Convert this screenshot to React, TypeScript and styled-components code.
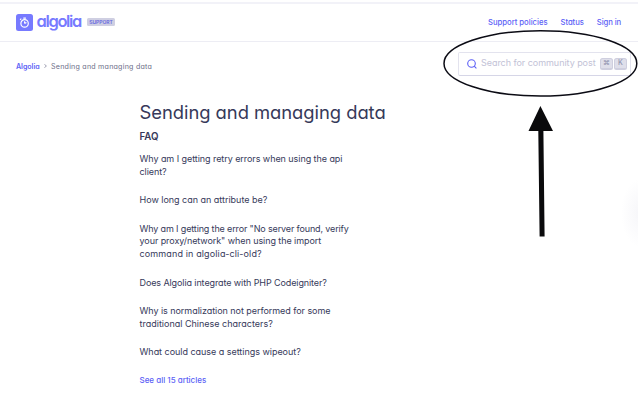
import React from "react";
import styled, { createGlobalStyle } from "styled-components";

const Global = createGlobalStyle`
  * { box-sizing: border-box; }
  body {
    margin: 0;
    background: #fff;
    color: #36395a;
    font-family: Inter, "Open Sans", sans-serif;
    font-feature-settings: "cv11" 1;
    overflow: hidden;
  }
`;

const Page = styled.div`
  position: relative;
  height: 400px;
  padding-top: 2px;
  overflow: hidden;
  background: radial-gradient(ellipse 19px 34px at 640px 213px, #f6f6f9, #fff);
`;

const Header = styled.header`
  height: 40px;
  padding: 0 17px 0 16px;
  display: flex;
  align-items: flex-start;
  justify-content: space-between;
  border-top: 2px solid #f2f2f8;
  border-bottom: 1px solid #ededf4;
`;

const Brand = styled.div`
  display: flex;
  align-items: center;
  height: 17px;
  margin-top: 10px;
`;

const LogoMark = styled.svg`
  width: 17px;
  height: 17px;
`;

const Wordmark = styled.span`
  margin: -2px 0 0 3.5px;
  width: 50.5px;
  font-size: 16.5px;
  line-height: 17px;
  font-weight: 600;
  letter-spacing: -1.35px;
  color: #777aff;
`;

const Badge = styled.span`
  width: 28px;
  height: 8.5px;
  margin-top: -1px;
  border-radius: 1.5px;
  background: #cfcfe2;
  color: #6668e0;
  font-size: 5px;
  line-height: 9px;
  font-weight: 600;
  text-align: center;
  letter-spacing: -0.05px;
`;

const Nav = styled.nav`
  display: flex;
  gap: 13px;
  margin-top: 13px;
`;

const NavLink = styled.a<{ $track: number }>`
  font-size: 7.7px;
  line-height: 11px;
  font-weight: 500;
  letter-spacing: ${(p) => p.$track}px;
  color: #5c5ff6;
  white-space: nowrap;
`;

const SubHeader = styled.div`
  display: flex;
  justify-content: space-between;
  padding: 10px 7px 0 16px;
`;

const Crumbs = styled.div`
  display: flex;
  align-items: center;
  height: 10px;
  margin-top: 9px;
  font-size: 7.1px;
  white-space: nowrap;
`;

const CrumbLink = styled.a`
  width: 24px;
  font-weight: 600;
  letter-spacing: -0.04px;
  color: #5c5ff6;
`;

const Chevron = styled.svg`
  width: 3px;
  height: 4px;
  margin: 0 4px;
`;

const CrumbCurrent = styled.span`
  letter-spacing: 0.23px;
  color: #6c6e88;
`;

const Search = styled.div`
  width: 173px;
  height: 24px;
  padding: 0 4px 1px 8px;
  display: flex;
  align-items: center;
  border: 1px solid #e3e3ee;
  border-bottom-color: #d6d6e7;
  border-radius: 2px;
`;

const SearchIcon = styled.svg`
  width: 10px;
  height: 10px;
  margin-right: 4px;
  flex: none;
`;

const Placeholder = styled.span`
  width: 119px;
  flex: none;
  font-size: 9px;
  line-height: 12px;
  margin-top: -1px;
  letter-spacing: -0.04px;
  color: #c2c2d6;
  white-space: nowrap;
`;

const Key = styled.kbd`
  flex: none;
  width: 13px;
  height: 12px;
  margin-right: 1px;
  display: grid;
  place-items: center;
  border: 1px solid #cfcfdf;
  border-bottom-width: 2px;
  border-radius: 2.5px;
  background: #dfdfea;
  color: #9294b0;
  font: 500 7px/8px Inter, "DejaVu Sans", sans-serif;
`;

const Main = styled.main`
  padding: 22px 0 0 139.5px;
`;

const Title = styled.h1`
  margin: 0;
  font-size: 18.4px;
  line-height: 28px;
  font-weight: 400;
  letter-spacing: -0.04px;
  white-space: nowrap;
`;

const Section = styled.h2`
  margin: 4px 0 10px;
  font-size: 9.7px;
  line-height: 13px;
  font-weight: 600;
`;

const Articles = styled.div`
  display: flex;
  flex-direction: column;
  gap: 15.4px;
`;

const Article = styled.a`
  display: block;
  font-size: 9px;
  line-height: 12.9px;
`;

const Line = styled.span<{ $track: number }>`
  display: block;
  white-space: nowrap;
  letter-spacing: ${(p) => p.$track}px;
`;

const SeeAll = styled.a`
  font-size: 8px;
  line-height: 12.9px;
  font-weight: 500;
  color: #5c5ff6;
`;

const Annotation = styled.svg`
  position: absolute;
  left: 0;
  top: 0;
  width: 638px;
  height: 400px;
  pointer-events: none;
`;

const articles: { text: string; track: number }[][] = [
  [
    { text: "Why am I getting retry errors when using the api", track: -0.06 },
    { text: "client?", track: -0.08 },
  ],
  [{ text: "How long can an attribute be?", track: -0.02 }],
  [
    { text: 'Why am I getting the error "No server found, verify', track: -0.14 },
    { text: 'your proxy/network" when using the import', track: -0.07 },
    { text: "command in algolia-cli-old?", track: 0.13 },
  ],
  [{ text: "Does Algolia integrate with PHP Codeigniter?", track: -0.1 }],
  [
    { text: "Why is normalization not performed for some", track: -0.05 },
    { text: "traditional Chinese characters?", track: 0 },
  ],
  [{ text: "What could cause a settings wipeout?", track: -0.03 }],
];

export default function App() {
  return (
    <Page>
      <Global />
      <Header>
        <Brand>
          <LogoMark viewBox="0 0 17 17">
            <rect width="17" height="17" rx="2.5" fill="#777aff" />
            <circle cx="8.6" cy="9.4" r="3.7" fill="none" stroke="#fff" strokeWidth="1.2" />
            <path d="M7.3 4.1h2.6M4.1 5.9l1.2-1.2M8.6 9.4V7.2M8.6 9.4l1.8-1" fill="none" stroke="#fff" strokeWidth="1.1" />
          </LogoMark>
          <Wordmark>algolia</Wordmark>
          <Badge>SUPPORT</Badge>
        </Brand>
        <Nav>
          <NavLink $track={-0.02}>Support policies</NavLink>
          <NavLink $track={-0.06}>Status</NavLink>
          <NavLink $track={-0.1}>Sign in</NavLink>
        </Nav>
      </Header>
      <SubHeader>
        <Crumbs>
          <CrumbLink>Algolia</CrumbLink>
          <Chevron viewBox="0 0 3 4">
            <path d="M.4.3 2.4 2 .4 3.7" fill="none" stroke="#777992" strokeWidth=".7" />
          </Chevron>
          <CrumbCurrent>Sending and managing data</CrumbCurrent>
        </Crumbs>
        <Search>
          <SearchIcon viewBox="0 0 10 10">
            <circle cx="4.5" cy="4.5" r="3.8" fill="none" stroke="#5c5ff6" strokeWidth="1.1" />
            <path d="m7.2 7.2 2.2 2.2" stroke="#5c5ff6" strokeWidth="1.1" />
          </SearchIcon>
          <Placeholder>Search for community post</Placeholder>
          <Key>⌘</Key>
          <Key>K</Key>
        </Search>
      </SubHeader>
      <Main>
        <Title>Sending and managing data</Title>
        <Section>FAQ</Section>
        <Articles>
          {articles.map((lines) => (
            <Article key={lines[0].text}>
              {lines.map((line) => (
                <Line key={line.text} $track={line.track}>
                  {line.text}
                </Line>
              ))}
            </Article>
          ))}
          <SeeAll>See all 15 articles</SeeAll>
        </Articles>
      </Main>
      <Annotation viewBox="0 0 638 400">
        <ellipse cx="540.4" cy="63.4" rx="96.4" ry="32.7" fill="none" stroke="#0b0b14" strokeWidth="1.5" />
        <path d="M540.4 106 553 131h-9.6l1.2 105.5h-5L538.3 131h-9.8z" fill="#0a0a0c" />
      </Annotation>
    </Page>
  );
}
